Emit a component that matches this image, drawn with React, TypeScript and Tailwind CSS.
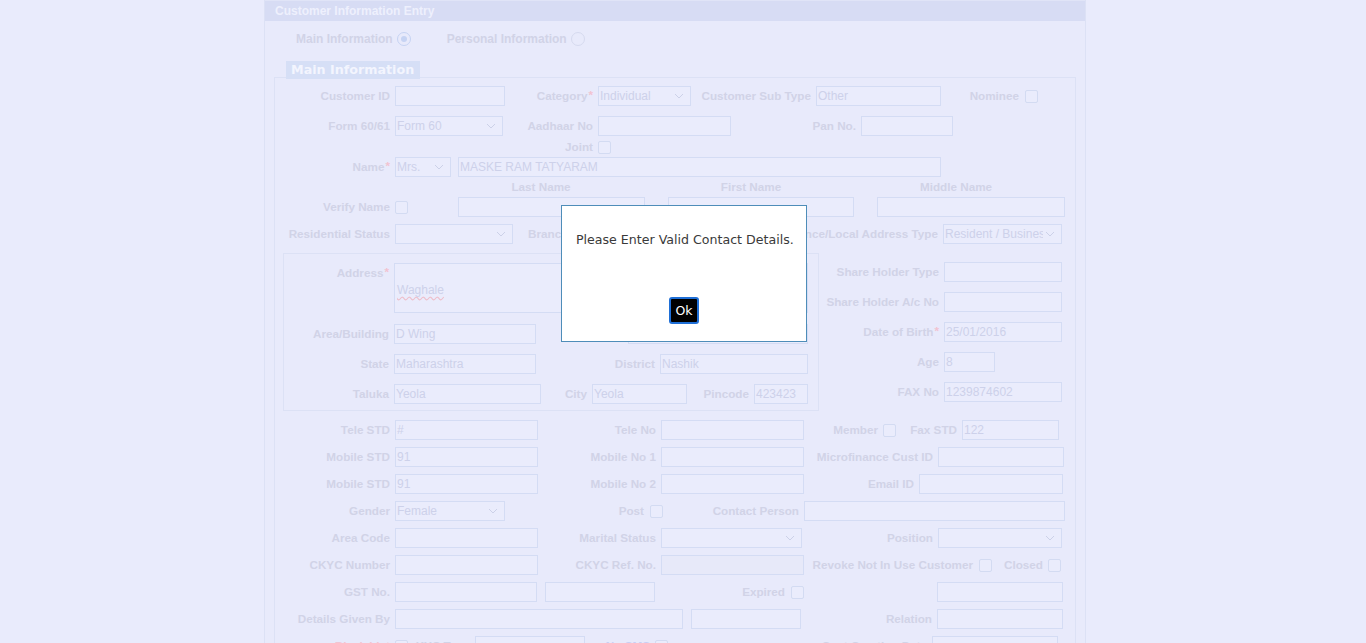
import React from "react";

const BOXBASE =
  "shrink-0 h-[20px] border border-[#D4DCF4] text-[12px] leading-[18px] pl-[1px] text-[#CDD1EA] whitespace-nowrap overflow-hidden";

function L({
  w,
  children,
  req,
  pr = "pr-[5px]",
  color = "text-[#D1D3E7]",
}: {
  w?: string;
  children?: React.ReactNode;
  req?: boolean;
  pr?: string;
  color?: string;
}) {
  return (
    <div
      className={`shrink-0 whitespace-nowrap text-right text-[11.7px] font-bold leading-[20px] ${color} ${pr} ${w ?? ""}`}
    >
      {children}
      {req && <span className="relative -top-[1px] ml-[1px] text-[#F2C3D1]">*</span>}
    </div>
  );
}

function I({ w, v, bg = "bg-[#EAECFC]" }: { w: string; v?: string; bg?: string }) {
  return <div className={`${BOXBASE} ${bg} ${w}`}>{v}</div>;
}

function S({ w, v }: { w: string; v?: string }) {
  return (
    <div className={`${BOXBASE} bg-[#EAECFC] ${w} flex items-center pr-[6px]`}>
      <span className="flex-1 overflow-hidden">{v}</span>
      <svg width="10" height="6" viewBox="0 0 10 6" className="shrink-0 ml-[2px]">
        <polyline points="1,1 5,5 9,1" fill="none" stroke="#CCD1E8" strokeWidth="1" />
      </svg>
    </div>
  );
}

function C() {
  return <div className="shrink-0 w-[13px] h-[13px] border border-[#D3DBF2] rounded-[2px] bg-[#EAECFC]" />;
}

function Row({ children, cls = "" }: { children: React.ReactNode; cls?: string }) {
  return <div className={`flex items-center h-[20px] ${cls}`}>{children}</div>;
}

export default function App() {
  return (
    <div className="relative h-[643px] w-[1366px] overflow-hidden bg-[#E9EBFC] font-['Liberation_Sans',Arial,sans-serif]">
      {/* main panel */}
      <div className="ml-[264px] w-[822px] h-[700px] border-x border-[#DCE1F5] bg-[#E8EAFB]">
        <div className="h-[21px] bg-[#D7DCF4] border-t border-[#E0E4F7] pl-[10px] text-[12px] font-bold leading-[20px] text-[#EEF0FD]">
          Customer Information Entry
        </div>

        {/* radio row */}
        <div className="mt-[8px] h-[20px] flex items-center pl-[31px] text-[12px] font-bold text-[#D1D3E7]">
          <span>Main Information</span>
          <span className="ml-[4px] w-[14px] h-[14px] rounded-full border border-[#C6D3F3] flex items-center justify-center">
            <span className="w-[6px] h-[6px] rounded-full bg-[#C6D3F3]" />
          </span>
          <span className="ml-[36px]">Personal Information</span>
          <span className="ml-[4px] w-[14px] h-[14px] rounded-full border border-[#D6DAEF]" />
        </div>

        {/* legend */}
        <div className="relative z-10 mt-[12px] ml-[21px] w-[134px] h-[18px] bg-[#D6DFF6] pl-[5px] text-[12.7px] font-bold leading-[18px] text-[#F3F5FE] font-['DejaVu_Sans',Verdana,sans-serif]">
          Main Information
        </div>

        {/* fieldset */}
        <div className="-mt-[2px] ml-[9px] w-[802px] h-[700px] border border-[#DCE1F5] pt-[8px]">
          <Row>
            <L w="w-[120px]">Customer ID</L>
            <I w="w-[110px]" />
            <L w="w-[93px]" req>
              Category
            </L>
            <S w="w-[93px]" v="Individual" />
            <L w="w-[125px]">Customer Sub Type</L>
            <I w="w-[125px]" v="Other" />
            <L w="w-[84px]" pr="pr-[6px]">
              Nominee
            </L>
            <C />
          </Row>
          <Row cls="mt-[10px]">
            <L w="w-[120px]">Form 60/61</L>
            <S w="w-[108px]" v="Form 60" />
            <L w="w-[95px]">Aadhaar No</L>
            <I w="w-[133px]" />
            <L w="w-[130px]">Pan No.</L>
            <I w="w-[92px]" />
          </Row>
          <Row cls="mt-[1px]">
            <L w="w-[323px]">Joint</L>
            <C />
          </Row>
          <Row>
            <L w="w-[120px]" req>
              Name
            </L>
            <S w="w-[56px]" v="Mrs." />
            <div className="w-[7px] shrink-0" />
            <I w="w-[483px]" v="MASKE RAM TATYARAM" />
          </Row>
          <div className="flex h-[19px] items-center text-[11.7px] font-bold text-[#D1D3E7]">
            <div className="w-[176px] shrink-0" />
            <div className="w-[180px] shrink-0 text-center">Last Name</div>
            <div className="w-[30px] shrink-0" />
            <div className="w-[180px] shrink-0 text-center">First Name</div>
            <div className="w-[25px] shrink-0" />
            <div className="w-[180px] shrink-0 text-center">Middle Name</div>
          </div>
          <Row cls="mt-[1px]">
            <L w="w-[120px]">Verify Name</L>
            <C />
            <div className="w-[50px] shrink-0" />
            <I w="w-[187px]" />
            <div className="w-[23px] shrink-0" />
            <I w="w-[186px]" />
            <div className="w-[23px] shrink-0" />
            <I w="w-[188px]" />
          </Row>
          <Row cls="mt-[7px] pr-[13px]">
            <L w="w-[120px]">Residential Status</L>
            <S w="w-[118px]" />
            <L pr="pr-[5px] pl-[15px]">Branch</L>
            <S w="w-[110px]" />
            <L w="flex-1">Residence/Local Address Type</L>
            <S w="w-[119px]" v="Resident / Business" />
          </Row>

          {/* address block */}
          <div className="mt-[9px] flex items-start">
            <div className="ml-[8px] w-[536px] h-[158px] shrink-0 border border-[#DCE1F5] pt-[9px]">
              <div className="flex items-start h-[50px]">
                <L w="w-[110px]" req>
                  Address
                </L>
                <div className="shrink-0 w-[414px] h-[50px] border border-[#D4DCF4] bg-[#EAECFC] pt-[17px] pl-[2px] text-[12px] text-[#CDD1EA]">
                  <span className="underline decoration-wavy decoration-[#EDBFCB] underline-offset-[2px]">Waghale</span>
                </div>
              </div>
              <Row cls="mt-[11px]">
                <L w="w-[110px]">Area/Building</L>
                <I w="w-[142px]" v="D Wing" />
                <L w="w-[92px]">Landmark</L>
                <I w="w-[180px]" />
              </Row>
              <Row cls="mt-[10px]">
                <L w="w-[110px]">State</L>
                <I w="w-[142px]" v="Maharashtra" />
                <L w="w-[124px]">District</L>
                <I w="w-[148px]" v="Nashik" />
              </Row>
              <Row cls="mt-[10px]">
                <L w="w-[110px]">Taluka</L>
                <I w="w-[147px]" v="Yeola" />
                <L w="w-[51px]">City</L>
                <I w="w-[95px]" v="Yeola" />
                <L w="w-[67px]">Pincode</L>
                <I w="w-[54px]" v="423423" />
              </Row>
            </div>
            <div className="mt-[9px] flex flex-col gap-[10px]">
              <Row>
                <L w="w-[125px]">Share Holder Type</L>
                <I w="w-[118px]" />
              </Row>
              <Row>
                <L w="w-[125px]">Share Holder A/c No</L>
                <I w="w-[118px]" />
              </Row>
              <Row>
                <L w="w-[125px]" req>
                  Date of Birth
                </L>
                <I w="w-[118px]" v="25/01/2016" />
              </Row>
              <Row>
                <L w="w-[125px]">Age</L>
                <I w="w-[51px]" v="8" />
              </Row>
              <Row>
                <L w="w-[125px]">FAX No</L>
                <I w="w-[118px]" v="1239874602" />
              </Row>
            </div>
          </div>

          {/* lower rows */}
          <div className="mt-[9px] flex flex-col gap-[7px]">
            <Row>
              <L w="w-[120px]">Tele STD</L>
              <I w="w-[143px]" v="#" />
              <L w="w-[123px]">Tele No</L>
              <I w="w-[143px]" />
              <L w="w-[79px]">Member</L>
              <C />
              <L w="w-[66px]">Fax STD</L>
              <I w="w-[97px]" v="122" />
            </Row>
            <Row>
              <L w="w-[120px]">Mobile STD</L>
              <I w="w-[143px]" v="91" />
              <L w="w-[123px]">Mobile No 1</L>
              <I w="w-[143px]" />
              <L w="w-[134px]">Microfinance Cust ID</L>
              <I w="w-[126px]" />
            </Row>
            <Row>
              <L w="w-[120px]">Mobile STD</L>
              <I w="w-[143px]" v="91" />
              <L w="w-[123px]">Mobile No 2</L>
              <I w="w-[143px]" />
              <L w="w-[115px]">Email ID</L>
              <I w="w-[144px]" />
            </Row>
            <Row>
              <L w="w-[120px]">Gender</L>
              <S w="w-[110px]" v="Female" />
              <L w="w-[145px]" pr="pr-[6px]">
                Post
              </L>
              <C />
              <L w="w-[141px]">Contact Person</L>
              <I w="w-[261px]" />
            </Row>
            <Row>
              <L w="w-[120px]">Area Code</L>
              <I w="w-[143px]" />
              <L w="w-[123px]">Marital Status</L>
              <S w="w-[141px]" />
              <L w="w-[136px]">Position</L>
              <S w="w-[124px]" />
            </Row>
            <Row>
              <L w="w-[120px]">CKYC Number</L>
              <I w="w-[143px]" />
              <L w="w-[123px]">CKYC Ref. No.</L>
              <I w="w-[143px]" bg="bg-[#E7E9F9]" />
              <L w="w-[175px]" pr="pr-[6px]">
                Revoke Not In Use Customer
              </L>
              <C />
              <L w="w-[56px]">Closed</L>
              <C />
            </Row>
            <Row>
              <L w="w-[120px]">GST No.</L>
              <I w="w-[142px]" />
              <div className="w-[8px] shrink-0" />
              <I w="w-[110px]" />
              <L w="w-[136px]" pr="pr-[6px]">
                Expired
              </L>
              <C />
              <div className="w-[133px] shrink-0" />
              <I w="w-[126px]" />
            </Row>
            <Row>
              <L w="w-[120px]">Details Given By</L>
              <I w="w-[288px]" />
              <div className="w-[8px] shrink-0" />
              <I w="w-[110px]" />
              <L w="w-[136px]">Relation</L>
              <I w="w-[126px]" />
            </Row>
            <Row>
              <L w="w-[120px]" color="text-[#F0C5D3]">
                Black List
              </L>
              <C />
              <L w="w-[67px]">KYC Type</L>
              <I w="w-[110px]" />
              <L w="w-[70px]" color="text-[#C8CEF4]">
                No SMS
              </L>
              <C />
              <L w="w-[264px]">Cust Creation Date</L>
              <I w="w-[126px]" />
            </Row>
          </div>
        </div>
      </div>

      {/* modal dialog */}
      <div className="absolute left-[561px] top-[205px] w-[246px] h-[137px] bg-white border border-[#4E8DB9] font-['DejaVu_Sans',Verdana,sans-serif]">
        <div className="pl-[14px] pt-[26px] text-[12.6px] leading-[16px] text-[#3A3A3A] whitespace-nowrap">
          Please Enter Valid Contact Details.
        </div>
        <div className="mt-[49px] flex justify-center">
          <button className="w-[30px] h-[27px] rounded-[3px] border-2 border-[#1F6FD6] bg-black text-[12.5px] leading-[22px] text-white">
            Ok
          </button>
        </div>
      </div>
    </div>
  );
}
